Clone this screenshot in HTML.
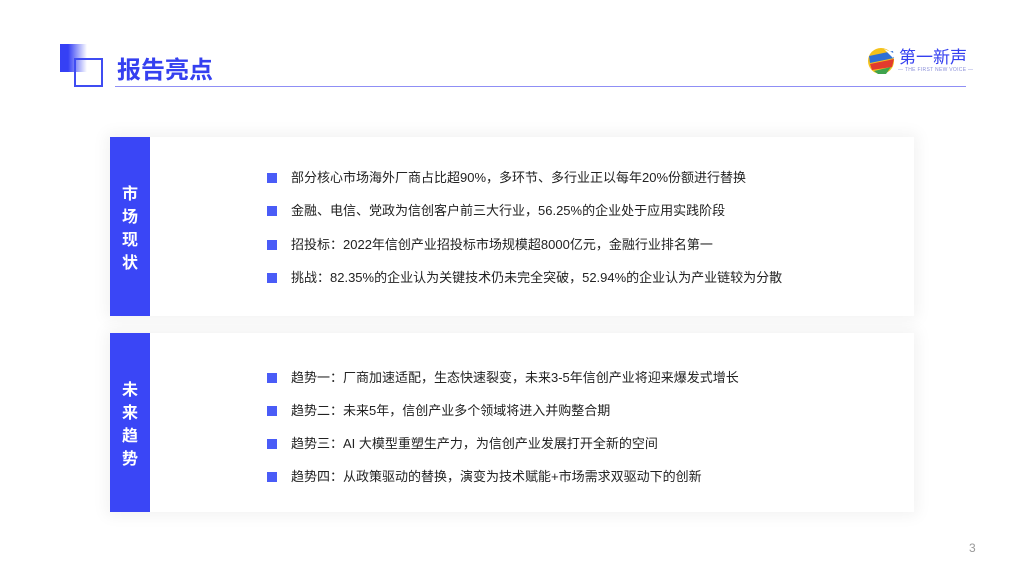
<!DOCTYPE html>
<html><head><meta charset="utf-8"><style>
*{margin:0;padding:0;box-sizing:border-box}
body{width:1024px;height:576px;background:#fff;position:relative;overflow:hidden;font-family:"Liberation Sans","Noto Sans CJK SC",sans-serif}
.sq1{position:absolute;left:60px;top:44px;width:27px;height:28px;background:linear-gradient(90deg,#3540f5 30%,#ffffff)}
.sq2{position:absolute;left:74px;top:58px;width:29px;height:29px;border:2px solid #3f4cf2}
.title{position:absolute;left:117px;top:53px;font-size:24px;font-weight:bold;color:#3540f0;font-family:"Noto Sans CJK SC",sans-serif;line-height:30px}
.line{position:absolute;left:115px;top:86px;width:851px;height:1px;background:#8f8ff5}
.card{position:absolute;left:110px;width:804px;height:179px;background:#fff;box-shadow:0 0 14px 4px rgba(0,0,0,0.05)}
.bar{position:absolute;left:0;top:0;width:40px;height:100%;background:#3a46f6;color:#fff;font-weight:bold;font-size:16px;font-family:"Noto Sans CJK SC",sans-serif;display:flex;flex-direction:column;align-items:center;justify-content:center;line-height:23px}
.item{position:absolute;left:181px;font-size:13px;color:#222;line-height:18px;white-space:nowrap}
.item:before{content:"";position:absolute;left:-24px;top:4px;width:10px;height:10px;background:#4a5cf7}
.num{position:absolute;left:969px;top:541px;font-size:12px;color:#999}
</style></head><body>
<div class="sq1"></div><div class="sq2"></div>
<div class="title">报告亮点</div>
<div class="line"></div>
<svg style="position:absolute;left:866px;top:46px" width="32" height="30" viewBox="0 0 32 30">
<circle cx="15" cy="15" r="13" fill="#f4c21b"/>
<path d="M3 10 L27 5 L28 12 L4 17Z" fill="#2d6fd6"/>
<path d="M4 18 L28 13 L26 21 L6 24Z" fill="#e23a2d"/>
<path d="M8 25 L25 21 L20 28 L12 28Z" fill="#3fa34d"/>
<path d="M18 3 L30 8 L27 12Z" fill="#fff"/>
</svg>
<div style="position:absolute;left:899px;top:45px;font-size:17px;color:#3540f0;font-family:'Noto Sans CJK SC',sans-serif;line-height:22px">第一新声</div>
<div style="position:absolute;left:898px;top:67px;font-size:5px;color:#8a8fd8;white-space:nowrap;letter-spacing:0.3px">— THE FIRST NEW VOICE —</div>

<div class="card" style="top:137px">
<div class="bar"><span>市</span><span>场</span><span>现</span><span>状</span></div>
<div class="item" style="top:32px">部分核心市场海外厂商占比超90%，多环节、多行业正以每年20%份额进行替换</div>
<div class="item" style="top:65px">金融、电信、党政为信创客户前三大行业，56.25%的企业处于应用实践阶段</div>
<div class="item" style="top:99px">招投标：2022年信创产业招投标市场规模超8000亿元，金融行业排名第一</div>
<div class="item" style="top:132px">挑战：82.35%的企业认为关键技术仍未完全突破，52.94%的企业认为产业链较为分散</div>
</div>

<div class="card" style="top:333px">
<div class="bar"><span>未</span><span>来</span><span>趋</span><span>势</span></div>
<div class="item" style="top:36px">趋势一：厂商加速适配，生态快速裂变，未来3-5年信创产业将迎来爆发式增长</div>
<div class="item" style="top:69px">趋势二：未来5年，信创产业多个领域将进入并购整合期</div>
<div class="item" style="top:102px">趋势三：AI 大模型重塑生产力，为信创产业发展打开全新的空间</div>
<div class="item" style="top:135px">趋势四：从政策驱动的替换，演变为技术赋能+市场需求双驱动下的创新</div>
</div>
<div class="num">3</div>
</body></html>
